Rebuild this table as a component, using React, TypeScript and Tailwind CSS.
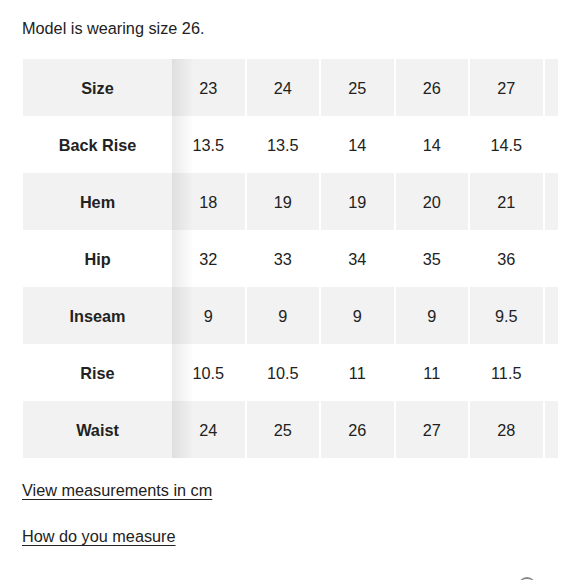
import React from "react";

const rows: { label: string; values: string[]; gray: boolean }[] = [
  { label: "Size", values: ["23", "24", "25", "26", "27"], gray: true },
  { label: "Back Rise", values: ["13.5", "13.5", "14", "14", "14.5"], gray: false },
  { label: "Hem", values: ["18", "19", "19", "20", "21"], gray: true },
  { label: "Hip", values: ["32", "33", "34", "35", "36"], gray: false },
  { label: "Inseam", values: ["9", "9", "9", "9", "9.5"], gray: true },
  { label: "Rise", values: ["10.5", "10.5", "11", "11", "11.5"], gray: false },
  { label: "Waist", values: ["24", "25", "26", "27", "28"], gray: true },
];

export default function App() {
  return (
    <div
      className="relative w-[580px] h-[580px] overflow-hidden bg-white px-[22px] pt-[16px] text-[16.25px] leading-[24px] text-[#222]"
      style={{ fontFamily: '"Liberation Sans", Arial, sans-serif' }}
    >
      <p>Model is wearing size 26.</p>
      <div className="relative mt-[19px] ml-[1px] w-[535px] overflow-hidden">
        <div className="flex flex-col w-max">
          {rows.map((r) => (
            <div key={r.label} className="flex h-[57px]">
              <div
                className={`w-[149px] shrink-0 flex items-center justify-center font-bold ${
                  r.gray ? "bg-[#f2f2f2]" : "bg-white"
                }`}
              >
                {r.label}
              </div>
              {r.values.map((v, i) => (
                <div
                  key={i}
                  className={`w-[72.5px] shrink-0 flex items-center justify-center ${
                    i > 0 ? "ml-[2px]" : ""
                  } ${r.gray ? "bg-[#f2f2f2]" : "bg-white"}`}
                >
                  {v}
                </div>
              ))}
              <div
                className={`w-[72.5px] shrink-0 ml-[2px] ${r.gray ? "bg-[#f2f2f2]" : "bg-white"}`}
              />
            </div>
          ))}
        </div>
        <div className="pointer-events-none absolute top-0 bottom-0 left-[149px] w-[22px] bg-gradient-to-r from-[rgba(0,0,0,0.08)] to-transparent" />
      </div>
      <div className="mt-[20px] flex flex-col gap-[22px] items-start">
        <a className="underline underline-offset-[3px] decoration-[1px]">View measurements in cm</a>
        <a className="underline underline-offset-[3px] decoration-[1px]">How do you measure</a>
      </div>
      <div className="absolute left-[518px] top-[577px] w-[18px] h-[18px] rounded-full border-t-[2px] border-[#888]" />
    </div>
  );
}
